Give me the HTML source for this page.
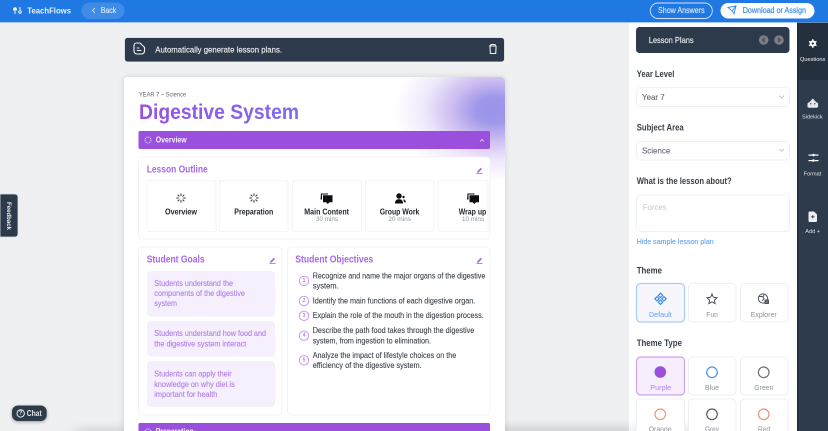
<!DOCTYPE html>
<html><head><meta charset="utf-8"><style>
html,body{margin:0;padding:0;width:828px;height:431px;overflow:hidden;background:#eff0f2}
svg{display:block}
text{font-family:"Liberation Sans",sans-serif;dominant-baseline:central}
.b{font-weight:700}
</style></head><body>
<svg width="828" height="431" viewBox="0 0 828 431" xmlns="http://www.w3.org/2000/svg">
<defs>
<radialGradient id="rg" gradientUnits="userSpaceOnUse" cx="494" cy="110" r="100" gradientTransform="translate(494 110) scale(1 .72) translate(-494 -110)">
<stop offset="0" stop-color="#9a95ea"/><stop offset=".18" stop-color="#9f97ea"/><stop offset=".42" stop-color="#cdbdf1"/><stop offset=".7" stop-color="#efe8fb"/><stop offset="1" stop-color="#fff"/>
</radialGradient>
<linearGradient id="tg" x1="0" x2="1" y1="0" y2="0"><stop offset="0" stop-color="#9b51e0"/><stop offset="1" stop-color="#7b6cf0"/></linearGradient>
<filter id="sh" x="-10%" y="-10%" width="120%" height="120%"><feDropShadow dx="0" dy="0" stdDeviation="3" flood-color="#000" flood-opacity=".14"/></filter>
<filter id="sh2" x="-30%" y="-30%" width="160%" height="170%"><feDropShadow dx="0" dy="1" stdDeviation="1.5" flood-color="#000" flood-opacity=".35"/></filter>
<filter id="blur" x="-30%" y="-200%" width="160%" height="500%"><feGaussianBlur stdDeviation="6 4"/></filter>
</defs>

<rect width="828" height="431" fill="#eff0f2"/>

<!-- bottom haze behind card -->
<rect x="75" y="427" width="60" height="12" fill="#cfd0d3" opacity=".75" filter="url(#blur)"/>
<rect x="495" y="426" width="140" height="14" fill="#cfd0d3" opacity=".9" filter="url(#blur)"/>

<!-- main card -->
<rect x="124" y="77" width="381" height="370" rx="4" fill="#fff" filter="url(#sh)"/>
<clipPath id="cc"><rect x="124" y="77" width="381" height="354" rx="4"/></clipPath>
<g clip-path="url(#cc)"><rect x="380" y="77" width="125" height="120" fill="url(#rg)"/></g>

<!-- banner -->
<rect x="124.500" y="37.500" width="380" height="24.500" rx="3" fill="#2d3a4b" stroke="#fff" stroke-opacity=".7"/>
<g fill="none" stroke="#f2f3f5" stroke-width="1.100">
<path d="M134 45.500a2.500 2.500 0 0 1 2.500-2.500h3.500l4.500 4.300v3.700a3 3 0 0 1-3 3h-4.500a3 3 0 0 1-3-3z"/>
<path d="M136.800 48h2.500M136.800 50.500h4.500"/>
</g>
<text x="155.300" y="49.500" font-size="8.300" fill="#eceef0" stroke="#eceef0" stroke-width=".15" textLength="126.700" lengthAdjust="spacingAndGlyphs">Automatically generate lesson plans.</text>
<g fill="none" stroke="#eceef0" stroke-width="1.100">
<path d="M489 46h7.500M490 46.300l.4 7.200h5.300l.4-7.200"/><path d="M490.500 45.500l.5-1h4l.5 1"/>
</g>

<!-- card header -->
<text x="139" y="95" font-size="6.500" fill="#5d6470" textLength="47" lengthAdjust="spacingAndGlyphs">YEAR 7 – Science</text>
<text x="139" y="112.500" font-size="21" class="b" fill="url(#tg)" textLength="160" lengthAdjust="spacingAndGlyphs">Digestive System</text>

<!-- overview bar -->
<rect x="138.500" y="131" width="351.500" height="18" rx="1.500" fill="#9b50dd"/>
<circle cx="148" cy="140" r="3" fill="none" stroke="#e6d2f8" stroke-width="1" stroke-dasharray="1.200 .8"/>
<text x="155.700" y="140" font-size="7.800" class="b" fill="#f7f0fd" textLength="31" lengthAdjust="spacingAndGlyphs">Overview</text>
<path d="M480 141.500l2-2 2 2" fill="none" stroke="#e9d8f8" stroke-width=".8"/>

<!-- lesson outline -->
<rect x="138.500" y="157" width="351.500" height="82" rx="4" fill="#fff" stroke="#f3f1fb"/>
<text x="146.700" y="169.800" font-size="10" class="b" fill="#a668e8" textLength="61" lengthAdjust="spacingAndGlyphs">Lesson Outline</text>
<g fill="#a765e6"><path d="M477.300 171.300l3.500-3.500 1.200 1.200-3.500 3.500-1.500.3z"/><rect x="476.500" y="173" width="6" height=".8"/></g>

<g fill="#fff" stroke="#f4f2fb">
<rect x="147" y="180.500" width="69" height="51" rx="2"/>
<rect x="219.500" y="180.500" width="68.500" height="51" rx="2"/>
<rect x="292.500" y="180.500" width="69" height="51" rx="2"/>
<rect x="365.500" y="180.500" width="68.500" height="51" rx="2"/>
<path d="M488 180.500h-48a2 2 0 0 0-2 2v47a2 2 0 0 0 2 2h48z"/>
</g>
<!-- spinners -->
<g stroke="#30343b" stroke-width="1" stroke-linecap="round">
<path d="M181 193.700v1.800M181 200.500v1.800M176.700 198h1.800M183.500 198h1.800M178 195l1.200 1.200M182.800 199.800l1.200 1.200M178 201l1.200-1.200M182.800 196.200l1.200-1.200"/>
<path d="M254 193.700v1.800M254 200.500v1.800M249.700 198h1.800M256.500 198h1.800M251 195l1.200 1.200M255.800 199.800l1.200 1.200M251 201l1.200-1.200M255.800 196.200l1.200-1.200"/>
</g>
<!-- chat icons -->
<g fill="#0c0e12">
<path d="M321 193.500h7v1h-6v5h-1.500z"/><path d="M323 195.200h9.500v7h-3l-1.700 1.800-1.700-1.800H323z"/>
<path d="M467.500 193.500h7v1h-6v5h-1.500z"/><path d="M469.500 195.200h9.500v7h-3l-1.700 1.800-1.700-1.800h-3.100z"/>
<!-- group icon -->
<circle cx="399" cy="196" r="2.700"/><path d="M395 203.500c0-3 1.500-4.200 4-4.200s4 1.200 4 4.200z"/><circle cx="403.500" cy="197" r="1.200"/><path d="M404 199.500c1.200.3 1.800 1.300 1.800 2.800h-1.800c0-1.200-.3-2-1-2.500z"/>
</g>
<g font-size="7.800" fill="#23272f" font-weight="700">
<text x="165" y="212" textLength="32" lengthAdjust="spacingAndGlyphs">Overview</text>
<text x="234.300" y="212" textLength="39" lengthAdjust="spacingAndGlyphs">Preparation</text>
<text x="304.300" y="212" textLength="44.700" lengthAdjust="spacingAndGlyphs">Main Content</text>
<text x="379.700" y="212" textLength="39.700" lengthAdjust="spacingAndGlyphs">Group Work</text>
<text x="458.700" y="212" textLength="27.600" lengthAdjust="spacingAndGlyphs">Wrap up</text>
</g>
<g font-size="6.200" fill="#8f949c">
<text x="316" y="219.700" textLength="22" lengthAdjust="spacingAndGlyphs">30 mins</text>
<text x="388.300" y="219.700" textLength="22.700" lengthAdjust="spacingAndGlyphs">20 mins</text>
<text x="462" y="219.700" textLength="22" lengthAdjust="spacingAndGlyphs">10 mins</text>
</g>

<!-- goals -->
<rect x="138.500" y="247" width="143.500" height="168" rx="4" fill="#fff" stroke="#f3f1fb"/>
<text x="146.700" y="260" font-size="10" class="b" fill="#a668e8" textLength="58" lengthAdjust="spacingAndGlyphs">Student Goals</text>
<g fill="#a765e6"><path d="M270.300 261.300l3.500-3.500 1.200 1.200-3.500 3.500-1.500.3z"/><rect x="269.500" y="263" width="6" height=".8"/></g>
<rect x="147" y="271" width="128" height="45.500" rx="4" fill="#f6effd"/>
<rect x="147" y="321" width="128" height="35.500" rx="4" fill="#f6effd"/>
<rect x="147" y="361" width="128" height="46" rx="4" fill="#f6effd"/>
<g font-size="7.900" fill="#b17fe9" stroke="#b17fe9" stroke-width=".12">
<text x="154.300" y="283.300" textLength="78.700" lengthAdjust="spacingAndGlyphs">Students understand the</text>
<text x="154.300" y="293.700" textLength="90.700" lengthAdjust="spacingAndGlyphs">components of the digestive</text>
<text x="154.300" y="303.700" textLength="22.700" lengthAdjust="spacingAndGlyphs">system</text>
<text x="154.300" y="333.700" textLength="111.700" lengthAdjust="spacingAndGlyphs">Students understand how food and</text>
<text x="154.300" y="344" textLength="92" lengthAdjust="spacingAndGlyphs">the digestive system interact</text>
<text x="154.300" y="374" textLength="77.400" lengthAdjust="spacingAndGlyphs">Students can apply their</text>
<text x="154.300" y="384.300" textLength="80.400" lengthAdjust="spacingAndGlyphs">knowledge on why diet is</text>
<text x="154.300" y="394.300" textLength="63" lengthAdjust="spacingAndGlyphs">important for health</text>
</g>

<!-- objectives -->
<rect x="287.500" y="247" width="202.500" height="168" rx="4" fill="#fff" stroke="#f3f1fb"/>
<text x="295.300" y="260" font-size="10" class="b" fill="#a668e8" textLength="78" lengthAdjust="spacingAndGlyphs">Student Objectives</text>
<g fill="#a765e6"><path d="M477.300 261.300l3.500-3.500 1.200 1.200-3.500 3.500-1.500.3z"/><rect x="476.500" y="263" width="6" height=".8"/></g>
<g fill="#fff" stroke="#c79bf3" stroke-width="1">
<circle cx="304" cy="281" r="4.700"/><circle cx="304" cy="301" r="4.700"/><circle cx="304" cy="315.800" r="4.700"/><circle cx="304" cy="335.700" r="4.700"/><circle cx="304" cy="360.300" r="4.700"/>
</g>
<g font-size="5" fill="#b27ce8" text-anchor="middle" font-weight="700">
<text x="304" y="281">1</text><text x="304" y="301">2</text><text x="304" y="315.800">3</text><text x="304" y="335.700">4</text><text x="304" y="360.300">5</text>
</g>
<g font-size="7.900" fill="#3d434d" stroke="#3d434d" stroke-width=".1">
<text x="312.700" y="276" textLength="172.600" lengthAdjust="spacingAndGlyphs">Recognize and name the major organs of the digestive</text>
<text x="312.700" y="286" textLength="26" lengthAdjust="spacingAndGlyphs">system.</text>
<text x="312.700" y="301" textLength="162.600" lengthAdjust="spacingAndGlyphs">Identify the main functions of each digestive organ.</text>
<text x="312.700" y="315.700" textLength="171" lengthAdjust="spacingAndGlyphs">Explain the role of the mouth in the digestion process.</text>
<text x="312.700" y="330.700" textLength="161.600" lengthAdjust="spacingAndGlyphs">Describe the path food takes through the digestive</text>
<text x="312.700" y="341" textLength="118.300" lengthAdjust="spacingAndGlyphs">system, from ingestion to elimination.</text>
<text x="312.700" y="355.300" textLength="143.600" lengthAdjust="spacingAndGlyphs">Analyze the impact of lifestyle choices on the</text>
<text x="312.700" y="365.700" textLength="109" lengthAdjust="spacingAndGlyphs">efficiency of the digestive system.</text>
</g>

<!-- preparation bar -->
<rect x="138.500" y="423" width="351.500" height="18" rx="1.500" fill="#9b50dd"/>
<circle cx="148" cy="432" r="3" fill="none" stroke="#e6d2f8" stroke-width="1" stroke-dasharray="1.200 .8"/>
<text x="155.700" y="431.500" font-size="7.800" class="b" fill="#f7f0fd" textLength="38" lengthAdjust="spacingAndGlyphs">Preparation</text>

<!-- right panel -->
<rect x="629" y="22" width="168" height="409" fill="#fff"/>
<rect x="629" y="427" width="80" height="10" fill="#cfd0d3" opacity=".5" filter="url(#blur)"/>
<rect x="636" y="27" width="153.500" height="26" rx="3.500" fill="#2d3a4b"/>
<text x="648.700" y="40" font-size="8.300" fill="#e6e8eb" stroke="#e6e8eb" stroke-width=".15" textLength="45" lengthAdjust="spacingAndGlyphs">Lesson Plans</text>
<circle cx="763.700" cy="40" r="4.800" fill="#7b7f85"/><circle cx="779" cy="40" r="4.800" fill="#7b7f85"/>
<path d="M764.700 38l-2 2 2 2M778 38l2 2-2 2" fill="none" stroke="#2d3a4b" stroke-width="1"/>

<g font-size="8.800" fill="#383e48" font-weight="700">
<text x="636.700" y="74" textLength="37.700" lengthAdjust="spacingAndGlyphs">Year Level</text>
<text x="636.700" y="127.500" textLength="47" lengthAdjust="spacingAndGlyphs">Subject Area</text>
<text x="636.700" y="181" textLength="95" lengthAdjust="spacingAndGlyphs">What is the lesson about?</text>
<text x="636.700" y="270.300" textLength="25.300" lengthAdjust="spacingAndGlyphs">Theme</text>
<text x="636.700" y="343" textLength="45.300" lengthAdjust="spacingAndGlyphs">Theme Type</text>
</g>
<g fill="#fff" stroke="#eef0f3" stroke-width="1">
<rect x="636.500" y="87.500" width="153" height="19" rx="4"/>
<rect x="636.500" y="141.500" width="153" height="18.500" rx="4"/>
<rect x="636.500" y="195" width="153" height="36.500" rx="4"/>
</g>
<text x="642" y="97" font-size="8.500" fill="#636973" stroke="#636973" stroke-width=".12" textLength="22.700" lengthAdjust="spacingAndGlyphs">Year 7</text>
<text x="642" y="150.500" font-size="8.500" fill="#636973" stroke="#636973" stroke-width=".12" textLength="28.300" lengthAdjust="spacingAndGlyphs">Science</text>
<path d="M779.300 95.700l2.300 2.300 2.300-2.300M779.300 149l2.300 2.300 2.300-2.300" fill="none" stroke="#b7bac0" stroke-width=".8"/>
<text x="642.700" y="207" font-size="8.500" fill="#c6c8cc" textLength="24" lengthAdjust="spacingAndGlyphs">Forces</text>
<text x="636.700" y="241.700" font-size="7.500" fill="#5ca2f2" stroke="#5ca2f2" stroke-width=".1" textLength="77" lengthAdjust="spacingAndGlyphs">Hide sample lesson plan</text>

<!-- theme cards -->
<rect x="636.500" y="283.500" width="48" height="38.500" rx="4" fill="#f8f6fd" stroke="#a8ccf8" stroke-width="1.200"/>
<g fill="#fff" stroke="#eff0f3">
<rect x="688.500" y="283.500" width="47.500" height="38.500" rx="4"/>
<rect x="740.500" y="283.500" width="47.500" height="38.500" rx="4"/>
</g>
<g fill="none" stroke="#2f86ec" stroke-width="1.100">
<path d="M660.500 293.200l2.200 2.200-2.200 2.200-2.200-2.200z"/><path d="M660.500 300l2.200 2.200-2.200 2.200-2.200-2.200z"/>
<path d="M657 296.600l2.200 2.200-2.200 2.200-2.200-2.200z"/><path d="M664 296.600l2.200 2.200-2.200 2.200-2.200-2.200z"/>
</g>
<path d="M712 294l1.500 3.300 3.500.4-2.600 2.400.7 3.500-3.100-1.800-3.100 1.800.7-3.500-2.600-2.400 3.500-.4z" fill="none" stroke="#4d525b" stroke-width="1"/>
<g fill="none" stroke="#4d525b" stroke-width="1"><circle cx="763" cy="298.500" r="4.600"/><path d="M759 296.500h3.500l1.500 2-2 2.500M764 294.500l-.5 2"/><rect x="765" y="300" width="3.500" height="3.500" fill="#6a6f77"/></g>
<g font-size="7.500">
<text x="649" y="314.500" fill="#5ca2f2" textLength="22.700" lengthAdjust="spacingAndGlyphs">Default</text>
<text x="706.300" y="314.500" fill="#8d9199" textLength="11.500" lengthAdjust="spacingAndGlyphs">Fun</text>
<text x="750.700" y="314.500" fill="#8d9199" textLength="26" lengthAdjust="spacingAndGlyphs">Explorer</text>
</g>

<!-- theme type -->
<rect x="636.500" y="357" width="48" height="38" rx="4" fill="#f6eefd" stroke="#cfa3f4" stroke-width="1.200"/>
<g fill="#fff" stroke="#eff0f3">
<rect x="688.500" y="357" width="47.500" height="38" rx="4"/>
<rect x="740.500" y="357" width="47.500" height="38" rx="4"/>
<rect x="636.500" y="399" width="48" height="40" rx="4"/>
<rect x="688.500" y="399" width="47.500" height="40" rx="4"/>
<rect x="740.500" y="399" width="47.500" height="40" rx="4"/>
</g>
<circle cx="660.300" cy="372" r="5.800" fill="#9b50dd"/>
<g fill="none" stroke-width="1.200">
<circle cx="712" cy="372.300" r="5.300" stroke="#4f95ec"/>
<circle cx="763.700" cy="372.300" r="5.300" stroke="#6b6f76"/>
<circle cx="660.300" cy="414.300" r="5.300" stroke="#eb9a78"/>
<circle cx="712" cy="414.300" r="5.300" stroke="#565b63"/>
<circle cx="763.700" cy="414.300" r="5.300" stroke="#ed8f78"/>
</g>
<g font-size="7.500" fill="#8d9199">
<text x="650.300" y="387.300" fill="#b380ea" textLength="21" lengthAdjust="spacingAndGlyphs">Purple</text>
<text x="705" y="387.300" textLength="14" lengthAdjust="spacingAndGlyphs">Blue</text>
<text x="754.300" y="387.300" textLength="19" lengthAdjust="spacingAndGlyphs">Green</text>
<text x="648.700" y="429" textLength="23" lengthAdjust="spacingAndGlyphs">Orange</text>
<text x="705" y="429" textLength="14" lengthAdjust="spacingAndGlyphs">Grey</text>
<text x="758" y="429" textLength="12" lengthAdjust="spacingAndGlyphs">Red</text>
</g>

<!-- sidebar -->
<rect x="797" y="22" width="31" height="409" fill="#2e3b4d"/>
<rect x="797" y="22" width="1.200" height="409" fill="#1f2936"/>
<rect x="798" y="22" width="30" height="58" fill="#25303f"/>
<g fill="#fff">
<circle cx="812.800" cy="43.500" r="3.100"/>
<g stroke="#fff" stroke-width="1.500"><path d="M812.800 39.300v8.400M809.100 41.400l7.400 4.200M809.100 45.600l7.400-4.200"/></g>
<circle cx="812.800" cy="43.500" r="1.100" fill="#25303f"/>
<path d="M812.800 98.500l3 3.300 2.300 1.500v3.700l-1.200 .8h-8.200l-1.200-.8v-3.700l2.300-1.500z" fill="#e6e8ec"/>
<circle cx="810.800" cy="103.800" r=".7" fill="#2e3b4d"/><circle cx="814.800" cy="103.800" r=".7" fill="#2e3b4d"/>
<rect x="808.500" y="154.500" width="4" height="1.200"/><rect x="814.500" y="154.500" width="4" height="1.200"/><circle cx="813.500" cy="155" r="1.300"/>
<rect x="808.500" y="160" width="4" height="1.200"/><rect x="815" y="160" width="3.500" height="1.200"/><circle cx="813.500" cy="160.500" r="1.300"/>
<path d="M809.500 211.500h4.500l3 3v6.500a1 1 0 0 1-1 1h-6.500a1 1 0 0 1-1-1v-8.500a1 1 0 0 1 1-1z" fill="#eceef0"/>
</g>
<path d="M812.800 215v3.500M811 216.800h3.600" stroke="#2e3b4d" stroke-width=".8"/>
<g font-size="5.900" fill="#dfe2e6">
<text x="800" y="60.200" fill="#f2f3f5" textLength="25.300" lengthAdjust="spacingAndGlyphs">Questions</text>
<text x="802" y="117.300" textLength="20.700" lengthAdjust="spacingAndGlyphs">Sidekick</text>
<text x="803.700" y="174.300" textLength="17.600" lengthAdjust="spacingAndGlyphs">Format</text>
<text x="805.300" y="232" textLength="14.700" lengthAdjust="spacingAndGlyphs">Add +</text>
</g>

<!-- topbar -->
<rect x="0" y="0" width="828" height="22" fill="#2079e3"/>
<rect x="0" y="22" width="828" height="1" fill="#7fb3ef" opacity=".7"/>
<g fill="#f4f7fb">
<circle cx="15" cy="9" r="1.800"/><rect x="14.500" y="11" width="1" height="3"/><rect x="13" y="9" width="4" height="1.500"/>
<rect x="19.500" y="7" width="1" height="3"/><circle cx="20" cy="12" r="1.800"/>
</g>
<circle cx="20" cy="12" r=".7" fill="#2079e3"/>
<text x="27.300" y="10.500" font-size="8.300" class="b" fill="#e8f1fc" textLength="43.700" lengthAdjust="spacingAndGlyphs">TeachFlows</text>
<rect x="81.500" y="2.500" width="43" height="16.500" rx="8.200" fill="#3e8ce8"/>
<path d="M95 8l-2.500 2.500 2.500 2.500" fill="none" stroke="#e5effb" stroke-width=".8"/>
<text x="100.700" y="10.700" font-size="7.800" fill="#e5effb" stroke="#e5effb" stroke-width=".12" textLength="15.500" lengthAdjust="spacingAndGlyphs">Back</text>

<rect x="650.300" y="3" width="62" height="15.500" rx="7.700" fill="#2079e3" stroke="#cfe2f9" stroke-width=".9"/>
<text x="658" y="10.700" font-size="7.800" fill="#d5e5f9" stroke="#d5e5f9" stroke-width=".15" textLength="46.700" lengthAdjust="spacingAndGlyphs">Show Answers</text>
<rect x="720.500" y="3" width="94" height="15.500" rx="7.700" fill="#fff"/>
<path d="M728 7.500l8-1.700-2 8-1.800-3zM732.200 10.800l3.500-4.700" fill="none" stroke="#3186e6" stroke-width=".9"/>
<text x="742.700" y="10.700" font-size="7.800" fill="#3f8ee9" stroke="#3f8ee9" stroke-width=".18" textLength="63.300" lengthAdjust="spacingAndGlyphs">Download or Assign</text>

<!-- feedback -->
<path d="M0 194h15a3 3 0 0 1 3 3v37a3 3 0 0 1-3 3H0z" fill="#2d3a4b" stroke="#dfe1e5" stroke-width=".8"/>
<text transform="translate(8.500 202) rotate(90)" x="0" y="0" font-size="6.500" class="b" fill="#eceef0" textLength="28" lengthAdjust="spacingAndGlyphs">Feedback</text>

<!-- chat -->
<rect x="12" y="405.500" width="34.700" height="15.500" rx="6" fill="#2d3a4b" filter="url(#sh2)"/>
<circle cx="20.700" cy="413.400" r="3.700" fill="none" stroke="#e8eaed" stroke-width="1"/>
<text x="20.700" y="413.400" font-size="5.500" class="b" fill="#e8eaed" text-anchor="middle">?</text>
<text x="26.700" y="413.400" font-size="7.800" class="b" fill="#dfe2e6" textLength="15" lengthAdjust="spacingAndGlyphs">Chat</text>
</svg>
</body></html>
